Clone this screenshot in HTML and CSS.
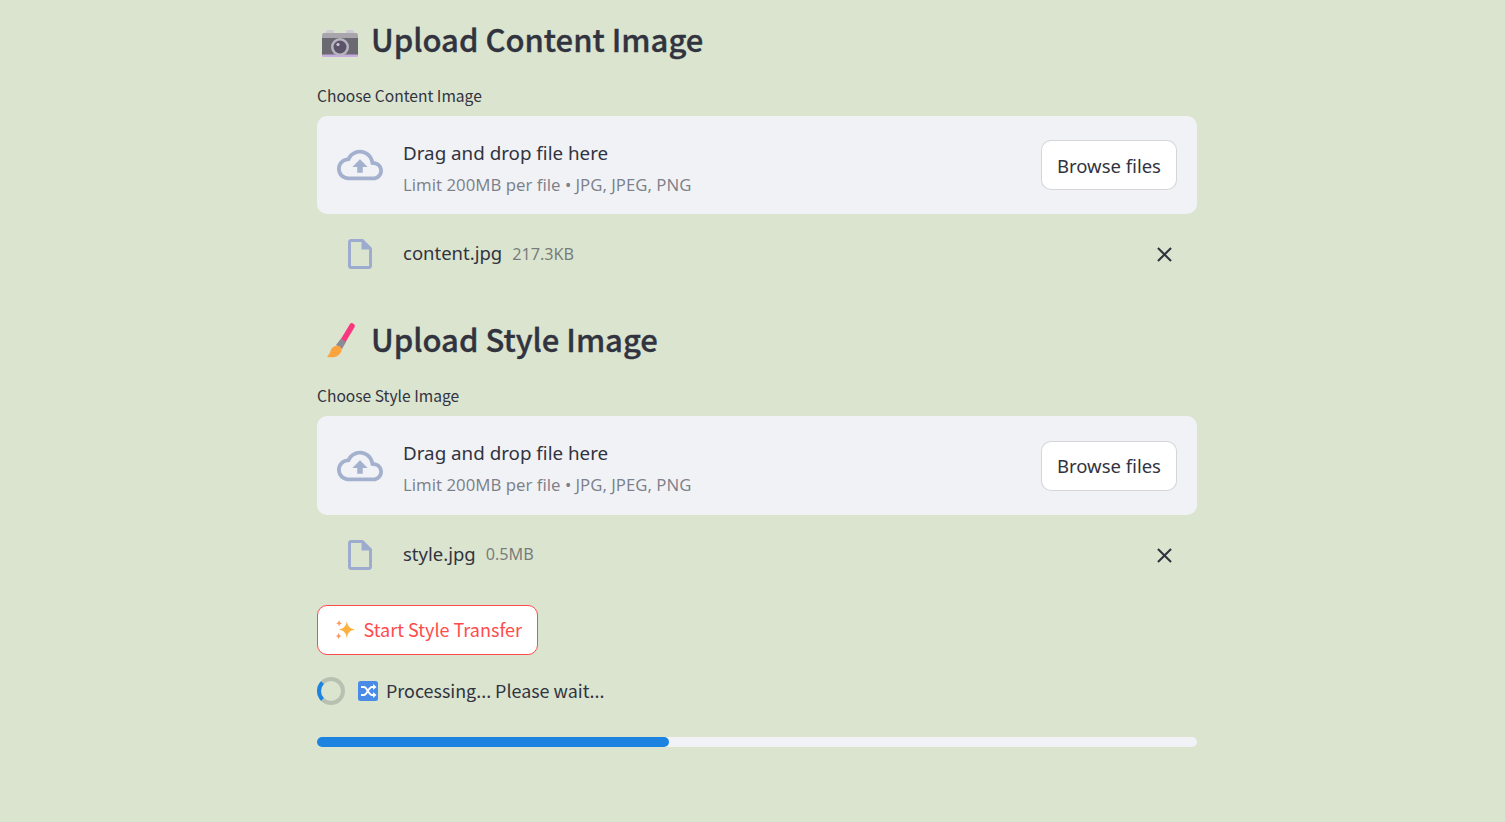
FILE: index.html
```html
<!DOCTYPE html>
<html lang="en">
<head>
    <meta charset="UTF-8">
    <title>Style Transfer</title>
    <link rel="stylesheet" href="styles.css">
</head>
<body>
    <main class="container">
        <h2 class="heading">
            <svg class="heading-icon" viewBox="0 -6 36 36">
                <rect x="4" y="1" width="8" height="5" rx="1.5" fill="#cfcbd4"/>
                <rect x="24" y="1" width="8" height="5" rx="1.5" fill="#cfcbd4"/>
                <rect x="0" y="4" width="36" height="8" rx="2" fill="#a8a5ad"/>
                <rect x="0" y="9" width="36" height="17" fill="#6a6870"/>
                <rect x="0" y="25.500" width="36" height="2.500" rx="1" fill="#c6addf"/>
                <circle cx="18" cy="18" r="9" fill="#b9b4c2"/>
                <circle cx="18" cy="18" r="6.500" fill="#5b5368"/>
                <circle cx="16" cy="15.500" r="1.600" fill="#cfc8dc"/>
            </svg>
            <span>Upload Content Image</span>
        </h2>
        <label class="field-label">Choose Content Image</label>
        <div class="dropzone">
            <svg class="cloud-icon" viewBox="0 0 24 24"><path d="M19.35 10.04C18.67 6.59 15.64 4 12 4 9.11 4 6.6 5.64 5.35 8.04 2.34 8.36 0 10.91 0 14c0 3.31 2.69 6 6 6h13c2.76 0 5-2.24 5-5 0-2.64-2.05-4.78-4.65-4.96zM19 18H6c-2.21 0-4-1.79-4-4 0-2.05 1.53-3.76 3.56-3.97l1.07-.11.5-.95C8.08 7.14 9.94 6 12 6c2.62 0 4.88 1.86 5.39 4.43l.3 1.5 1.53.11c1.56.1 2.78 1.41 2.78 2.96 0 1.65-1.35 3-3 3zM8 13h2.55v3h2.9v-3H16l-4-4z"/></svg>
            <div class="dropzone-text">
                <span class="drop-title">Drag and drop file here</span>
                <small class="drop-limit">Limit 200MB per file • JPG, JPEG, PNG</small>
            </div>
            <button class="browse-btn">Browse files</button>
        </div>
        <div class="file-row">
            <svg class="file-icon" viewBox="0 0 24 24"><path d="M14 2H6c-1.1 0-1.99.9-1.99 2L4 20c0 1.1.89 2 1.99 2H18c1.1 0 2-.9 2-2V8l-6-6zM6 20V4h7v5h5v11H6z"/></svg>
            <span class="file-name">content.jpg</span>
            <small class="file-size">217.3KB</small>
            <svg class="close-icon" viewBox="0 0 24 24"><path d="M19 6.41L17.59 5 12 10.59 6.41 5 5 6.41 10.59 12 5 17.59 6.41 19 12 13.41 17.59 19 19 17.59 13.41 12z"/></svg>
        </div>

        <h2 class="heading heading-second">
            <svg class="heading-icon" viewBox="0 0 36 36">
                <path d="M21 18L30 3" stroke="#f8387e" stroke-width="5.500" stroke-linecap="round" fill="none"/>
                <path d="M14 22l5-6.500 5 3.500-4 7z" fill="#8d8a94"/>
                <path d="M13 23c3-1 6 0 6.500 3 .5 3-2 6-5 7.500-3 1-6.500 1-9.500 .5 1.500-1.500 2.500-3 3.500-6 1-3 2.500-4 4.500-5z" fill="#fba43e"/>
            </svg>
            <span>Upload Style Image</span>
        </h2>
        <label class="field-label">Choose Style Image</label>
        <div class="dropzone">
            <svg class="cloud-icon" viewBox="0 0 24 24"><path d="M19.35 10.04C18.67 6.59 15.64 4 12 4 9.11 4 6.6 5.64 5.35 8.04 2.34 8.36 0 10.91 0 14c0 3.31 2.69 6 6 6h13c2.76 0 5-2.24 5-5 0-2.64-2.05-4.78-4.65-4.96zM19 18H6c-2.21 0-4-1.79-4-4 0-2.05 1.53-3.76 3.56-3.97l1.07-.11.5-.95C8.08 7.14 9.94 6 12 6c2.62 0 4.88 1.86 5.39 4.43l.3 1.5 1.53.11c1.56.1 2.78 1.41 2.78 2.96 0 1.65-1.35 3-3 3zM8 13h2.55v3h2.9v-3H16l-4-4z"/></svg>
            <div class="dropzone-text">
                <span class="drop-title">Drag and drop file here</span>
                <small class="drop-limit">Limit 200MB per file • JPG, JPEG, PNG</small>
            </div>
            <button class="browse-btn">Browse files</button>
        </div>
        <div class="file-row">
            <svg class="file-icon" viewBox="0 0 24 24"><path d="M14 2H6c-1.1 0-1.99.9-1.99 2L4 20c0 1.1.89 2 1.99 2H18c1.1 0 2-.9 2-2V8l-6-6zM6 20V4h7v5h5v11H6z"/></svg>
            <span class="file-name">style.jpg</span>
            <small class="file-size">0.5MB</small>
            <svg class="close-icon" viewBox="0 0 24 24"><path d="M19 6.41L17.59 5 12 10.59 6.41 5 5 6.41 10.59 12 5 17.59 6.41 19 12 13.41 17.59 19 19 17.59 13.41 12z"/></svg>
        </div>

        <button class="start-btn">
            <svg class="sparkle-icon" viewBox="0 0 22 22">
                <path d="M13 1.500c1 5.500 3 7.800 9 9-6 1.200-8 3.500-9 9.500-1-6-3-8.300-9-9.500 6-1.200 8-3.500 9-9z" fill="#fdb13f"/>
                <path d="M4.500 0c.5 2.300 1.200 3.200 3.500 3.700-2.300.5-3 1.400-3.500 3.800-.5-2.400-1.200-3.300-3.500-3.800C3.300 3.200 4 2.300 4.500 0z" fill="#fb9a62"/>
                <path d="M4 14c.5 2.300 1.200 3.200 3.500 3.700-2.300.5-3 1.400-3.500 3.800-.5-2.400-1.200-3.300-3.500-3.800C2.800 17.200 3.500 16.300 4 14z" fill="#fb9a62"/>
            </svg>
            <span class="start-label">Start Style Transfer</span>
        </button>

        <div class="status-row">
            <div class="spinner"></div>
            <svg class="shuffle-icon" viewBox="0 0 20 20">
                <rect width="20" height="20" rx="2.500" fill="#4a8be8"/>
                <path d="M3 6h3c3 0 4.500 8 8 8h1.500M3 14h3c3 0 4.500-8 8-8h1.500" fill="none" stroke="#fff" stroke-width="2"/>
                <path d="M15 3l3.500 3-3.500 3zM15 11l3.500 3-3.500 3z" fill="#fff"/>
            </svg>
            <span class="status-text">Processing... Please wait...</span>
        </div>

        <div class="progress">
            <div class="progress-bar" style="width: 40%"></div>
        </div>
    </main>
</body>
</html>
```

FILE: styles.css
```css
body {
    margin: 0;
    min-height: 822px;
    background-color: #dbe4cf;
    color: #31333f;
    font-family: "Noto Sans CJK SC", "Noto Sans", sans-serif;
    overflow: hidden;
}
.container {
    width: 880px;
    margin-left: 317px;
    display: flex;
    flex-direction: column;
}
.heading {
    display: flex;
    align-items: center;
    gap: 13px;
    height: 48px;
    margin: 17px 0 0;
    font-size: 31px;
    font-weight: 500;
    line-height: 44px;
    -webkit-text-stroke: 0.35px #31333f;
}
.heading span {
    padding-bottom: 4px;
}
.heading-second {
    margin-top: 37.7px;
}
.heading-icon {
    width: 36px;
    height: 36px;
    margin-left: 5px;
}
.field-label {
    height: 23px;
    margin-top: 19px;
    font-size: 15.6px;
    line-height: 22px;
}
.dropzone {
    display: flex;
    align-items: center;
    height: 98.4px;
    margin-top: 9px;
    padding: 0 20px;
    box-sizing: border-box;
    background-color: #f0f2f6;
    border-radius: 10px;
}
.cloud-icon {
    width: 46px;
    height: 46px;
    fill: #a3b1cf;
}
.dropzone-text {
    display: flex;
    flex-direction: column;
    flex: 1;
    margin-left: 20px;
    padding-top: 6px;
    font-family: "Noto Sans", sans-serif;
}
.drop-title {
    font-size: 18.8px;
    line-height: 32px;
}
.drop-limit {
    margin-top: 1px;
    font-size: 16.75px;
    line-height: 30px;
    color: rgba(49, 51, 63, 0.6);
}
.browse-btn {
    width: 136px;
    height: 50px;
    background-color: #fff;
    color: #31333f;
    border: 1px solid rgba(49, 51, 63, 0.2);
    border-radius: 10px;
    font-family: "Noto Sans", sans-serif;
    font-size: 18.5px;
}
.file-row {
    display: flex;
    align-items: center;
    height: 50px;
    margin-top: 15.3px;
    padding-left: 25px;
    font-family: "Noto Sans", sans-serif;
}
.file-icon {
    width: 36px;
    height: 36px;
    margin-bottom: 1px;
    fill: #9dacce;
}
.file-name {
    margin-left: 25px;
    padding-bottom: 4px;
    font-size: 18.5px;
}
.file-size {
    margin-left: 10px;
    padding-bottom: 2px;
    font-size: 16.2px;
    color: rgba(49, 51, 63, 0.6);
}
.close-icon {
    width: 25px;
    height: 25px;
    margin-left: auto;
    margin-right: 20px;
    fill: #31333f;
}
.start-btn {
    display: flex;
    align-items: center;
    justify-content: flex-end;
    gap: 8px;
    width: 221px;
    height: 50px;
    margin-top: 24.7px;
    padding: 0 15px 0 0;
    background-color: #fff;
    color: #ff4b4b;
    border: 1px solid #ff4b4b;
    border-radius: 10px;
    font-family: inherit;
    font-size: 18px;
}
.start-label {
    padding-bottom: 1px;
}
.sparkle-icon {
    width: 20px;
    height: 20px;
}
.status-row {
    display: flex;
    align-items: center;
    height: 32px;
    margin-top: 20px;
}
.spinner {
    width: 28px;
    height: 28px;
    box-sizing: border-box;
    border: 4px solid rgba(49, 51, 63, 0.2);
    border-left-color: #1c83e1;
    border-radius: 50%;
}
.shuffle-icon {
    width: 20px;
    height: 20px;
    margin-left: 13px;
}
.status-text {
    margin-left: 8px;
    padding-bottom: 2px;
    font-size: 17.9px;
}
.progress {
    height: 10px;
    margin-top: 30px;
    background-color: #f0f2f6;
    border-radius: 10px;
}
.progress-bar {
    height: 100%;
    background-color: #1c83e1;
    border-radius: 10px;
}
```
